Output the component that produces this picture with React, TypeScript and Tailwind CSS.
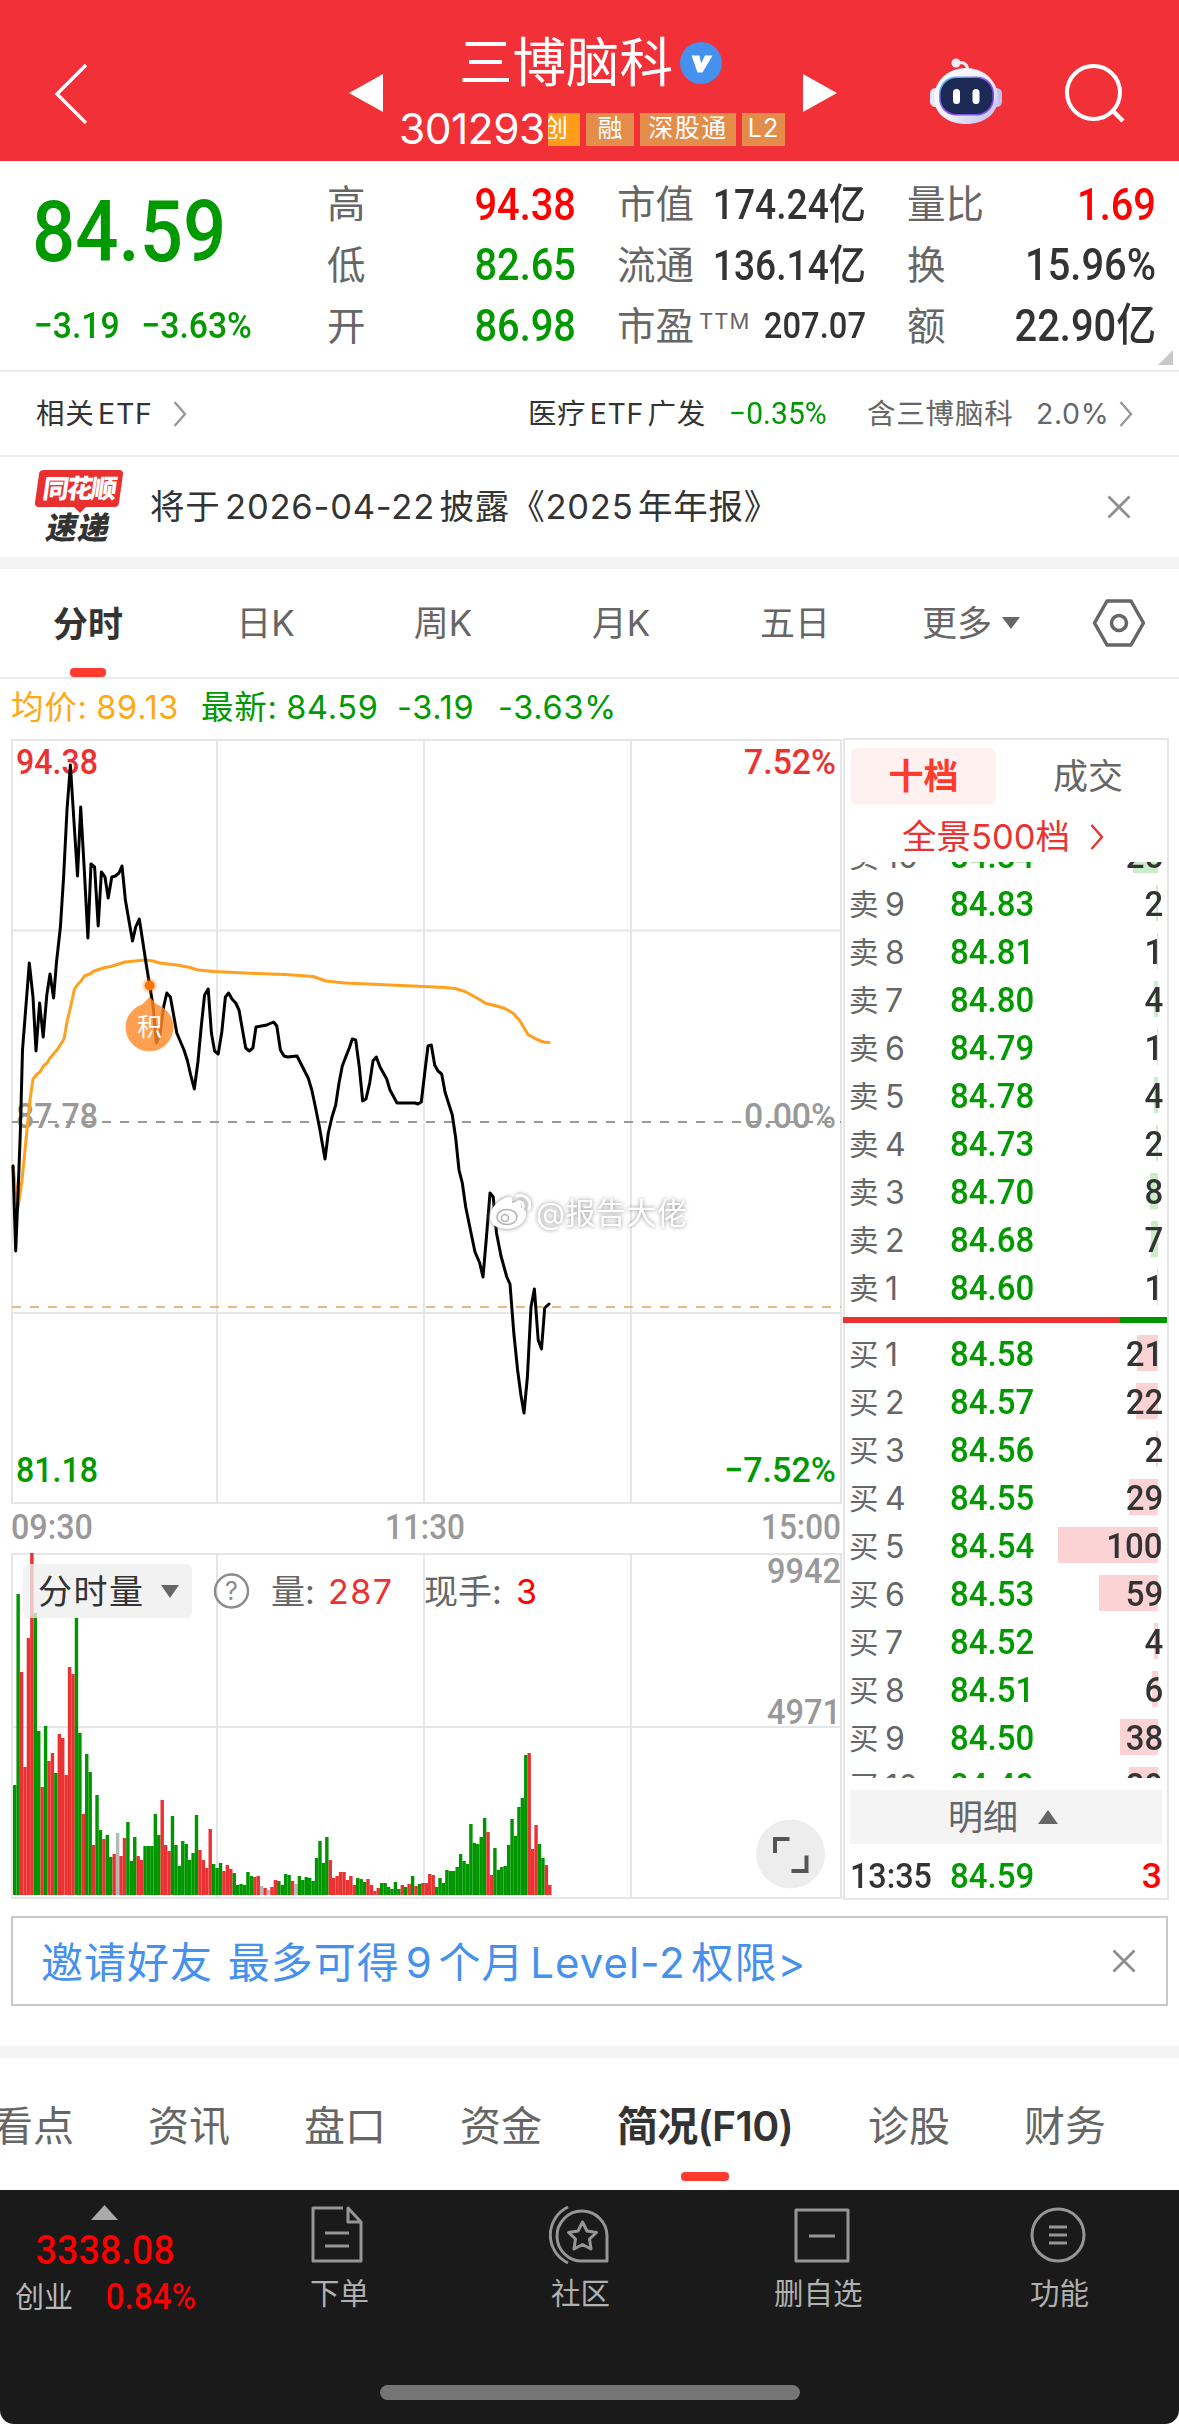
import clsx from "clsx";

const SANS = "font-['Inter','Noto_Sans_CJK_SC',sans-serif]";
const NUM = "font-['Roboto','Noto_Sans_CJK_SC',sans-serif] font-medium";

const stats = [
  [
    { label: "高", value: "94.38", color: "text-[#ff0000]" },
    { label: "低", value: "82.65", color: "text-[#009900]" },
    { label: "开", value: "86.98", color: "text-[#009900]" },
  ],
  [
    { label: "市值", value: "174.24亿", color: "text-[#333]", size: "text-[42px]" },
    { label: "流通", value: "136.14亿", color: "text-[#333]", size: "text-[42px]" },
    { label: "市盈", sup: "TTM", value: "207.07", color: "text-[#333]", size: "text-[37px]" },
  ],
  [
    { label: "量比", value: "1.69", color: "text-[#ff0000]" },
    { label: "换", value: "15.96%", color: "text-[#333]" },
    { label: "额", value: "22.90亿", color: "text-[#333]" },
  ],
];

const asks: [string, string, number][] = [
  ["10", "84.84", 25],
  ["9", "84.83", 2],
  ["8", "84.81", 1],
  ["7", "84.80", 4],
  ["6", "84.79", 1],
  ["5", "84.78", 4],
  ["4", "84.73", 2],
  ["3", "84.70", 8],
  ["2", "84.68", 7],
  ["1", "84.60", 1],
];

const bids: [string, string, number][] = [
  ["1", "84.58", 21],
  ["2", "84.57", 22],
  ["3", "84.56", 2],
  ["4", "84.55", 29],
  ["5", "84.54", 100],
  ["6", "84.53", 59],
  ["7", "84.52", 4],
  ["8", "84.51", 6],
  ["9", "84.50", 38],
  ["10", "84.49", 29],
];

const pricePoints =
  "13,1166 15.7,1251 18,1195 20.4,1130 22.5,1050 29.3,963 33,997 36,1051 39.6,1003 43.2,1037 46.8,995 50,974 53.6,998 56.4,963 60.4,927 63.6,877 67,810 70.4,765 74,822 77.5,876 80.7,807 84.3,870 87.9,938 91,864 94.6,867 98.2,926 101.4,872 105,877 108.2,898 111.8,877 115.4,876 119,873 122,866 125.4,900 129,921 132.5,941 135.7,927 139.3,919 143,943 146,963 149.6,985 153.2,1007 156.4,1043 160,1035 163.6,1007 166.8,993 170.4,997 173.6,1015 176.8,1033 184,1050 187.5,1061 190.7,1075 194.3,1089 197.9,1062 201.4,1025 204.6,995 208.2,989 211.4,1033 214.6,1051 218.2,1054 221.8,1032 225.4,997 228.6,993 232,999 235.7,1003 239,1010 242.5,1030 245.7,1048 249.3,1051 252.9,1048 256,1027 266.8,1025 273.6,1022 276.8,1026 280.4,1050 284,1056 287.5,1057 297,1056 304.6,1071 308.2,1078 311.8,1090 315.4,1107 319.6,1128 325,1159 328.3,1133 332,1117 335.7,1105 339,1083 342.3,1066 345.7,1057 349.3,1048 352.3,1039 355.7,1040 359.3,1067 362.7,1101 366,1099 369.7,1083 373,1061 376.3,1057 380,1067 386.7,1079 390,1090 397,1103 415,1103 418,1104 421.3,1102 424.7,1073 428,1046 431.3,1045 434.7,1065 438,1071 441.7,1074 445,1092 452.3,1115 455.7,1138 459,1170 462.3,1183 465.7,1207 470,1228 475,1252 479.7,1263 483,1277 486.2,1240 490,1193 493.2,1197 496.5,1233 501,1256 506.8,1277 510,1284 513.8,1333 517.6,1370 520.9,1395 524,1413 527.4,1377 531,1307 534.4,1289 538.2,1340 541.5,1349 544.7,1308 549,1304";

const averagePoints =
  "13,1166 18,1208 22,1180 27,1130 30,1100 33,1079 37,1074 40,1072 43.5,1066 47,1063 50,1058 57,1050 64,1039 67,1022 71,1005 74.5,989 78,984 81,981 84.5,976 91,973.5 94,971 105,967.5 111,966.5 125,962 145,960 153,961 160,963 177,965 190,967.5 198,970 214,971.5 257,973.5 285,974.5 313,976.5 326,981 345,983 424,986.5 445,987.5 455,988.5 465,991.5 477,998 486,1003.5 497,1006 505,1008.5 514,1014 520,1021 528,1034.5 536,1039 543,1042 549,1042.5";

// one entry per minute: g = down, r = up, n = unchanged, then the bar height
const volume =
  "g110 g301 r223 r128 r257 r342 g282 g164 r108 g169 r134 r142 g122 r161 r157 r120 r228 r221 g277 g162 r81 g141 g123 r50 g100 g65 r56 g60 g38 r41 n62 r39 r57 g73 g34 g58 r39 r35 g49 g49 g49 g81 g60 r95 r50 r44 g79 g50 g29 g54 g51 g35 g42 g80 r45 r35 r27 r66 g31 g27 g32 r24 r30 r26 g22 g10 g11 g10 g23 g19 r18 r19 n9 r7 n5 r8 r15 g14 g10 g21 g20 r14 n11 g19 g15 g18 g17 g14 g37 g54 g32 g58 r35 r17 r19 r23 r23 r15 r19 r10 g17 g16 g13 r16 r10 r4 r7 g12 g12 g8 g6 g13 g6 r10 g8 r11 g19 r9 g11 r12 r12 r21 r20 g8 g17 g12 g25 g24 g24 g28 g41 g34 g31 g71 g52 g51 g58 g77 r63 r20 g47 g25 g28 g29 g50 g76 g59 g88 g97 g140 r142 r46 r70 g51 g37 r30 r10"
    .split(" ")
    .map((v) => ({ type: v[0], height: Number(v.slice(1)) }));

const volumeColors: Record<string, string> = { g: "#009600", r: "#eb3232", n: "#b8b8b8" };

function Chevron({ color = "#999", className }: { color?: string; className?: string }) {
  return (
    <svg viewBox="0 0 14 26" className={clsx("h-[26px] w-[14px] shrink-0", className)} fill="none" stroke={color} strokeWidth="2.4">
      <path d="M1.5 1 12 13 1.5 25" />
    </svg>
  );
}

function Close() {
  return (
    <svg viewBox="0 0 24 24" className="h-6 w-6 shrink-0" fill="none" stroke="#8f8f8f" strokeWidth="2.8">
      <path d="M1.5 1.5 22.5 22.5M22.5 1.5 1.5 22.5" />
    </svg>
  );
}

function Robot() {
  return (
    <svg viewBox="0 0 74 68" className="h-[68px] w-[74px]">
      <defs>
        <linearGradient id="shell" x1="0" y1="0" x2="1" y2="1">
          <stop offset="0" stopColor="#ffffff" />
          <stop offset="0.55" stopColor="#f0effb" />
          <stop offset="1" stopColor="#b9b6e6" />
        </linearGradient>
        <linearGradient id="visor" x1="0" y1="0" x2="1" y2="1">
          <stop offset="0" stopColor="#59d5f5" />
          <stop offset="0.5" stopColor="#8a4df0" />
          <stop offset="1" stopColor="#6a58f5" />
        </linearGradient>
      </defs>
      <path d="M27 5c6-1.500 11 0 11.500 6" fill="none" stroke="#f3f0fb" strokeWidth="3" />
      <circle cx="27" cy="5" r="4.500" fill="#f3f0fb" />
      <rect x="1" y="30" width="12" height="19" rx="5.500" fill="#e8e7f7" />
      <rect x="61" y="30" width="12" height="19" rx="5.500" fill="#c4c2ea" />
      <path d="M37 10C56 10 69 24 69 40c0 16-14 26-32 26S5 56 5 40C5 24 18 10 37 10Z" fill="url(#shell)" />
      <rect x="10" y="18.500" width="55" height="39" rx="17" fill="url(#visor)" />
      <rect x="11.500" y="20" width="52" height="36" rx="16" fill="#1e2a56" />
      <rect x="24" y="31" width="7" height="15" rx="3.500" fill="#fff" />
      <rect x="43.500" y="31" width="7" height="15" rx="3.500" fill="#fff" />
    </svg>
  );
}

function Header() {
  return (
    <header className="flex h-[161px] items-start bg-[#f23038] text-white">
      <svg viewBox="0 0 34 60" className="mt-[64px] ml-[54px] h-[60px] w-[34px]" fill="none" stroke="#fff" strokeWidth="3.4">
        <path d="M32 1 3 30 32 59" />
      </svg>
      <svg viewBox="0 0 34 38" className="mt-[74px] ml-[261px] h-[38px] w-[34px]">
        <path d="M34 0V38L0 19Z" fill="#fff" />
      </svg>
      <div className="ml-4 w-[404px]">
        <div className="mt-[35px] flex h-14 items-center pl-[60px]">
          <span className="text-[53.500px] leading-none">三博脑科</span>
          <svg viewBox="0 0 42 42" className="ml-[7px] h-[42px] w-[42px]">
            <circle cx="21" cy="21" r="21" fill="#4691ee" />
            <path d="M11.500 13.500h8l1.500 8 4-8h7.500L22.500 30.500h-5Z" fill="#fff" />
          </svg>
        </div>
        <div className="mt-[20px] flex h-[36px] items-center text-[25px]">
          <span className="w-[149px] pt-px text-[42.500px] leading-none tracking-[-.5px]">301293</span>
          <span className="flex h-[33px] w-8 items-center justify-end overflow-hidden bg-[#ff9d1a] pr-3">创</span>
          <span className="ml-[6px] flex h-[33px] w-12 items-center justify-center bg-[#e48c4a]">融</span>
          <span className="ml-[6px] flex h-[33px] w-24 items-center justify-center bg-[#e48c4a] tracking-[1.500px]">深股通</span>
          <span className="ml-[6px] flex h-[33px] w-[43px] items-center justify-center bg-[#e48c4a] tracking-[1px]">L2</span>
        </div>
      </div>
      <svg viewBox="0 0 34 38" className="mt-[74px] h-[38px] w-[34px]">
        <path d="M0 0V38L34 19Z" fill="#fff" />
      </svg>
      <div className="mt-[58px] ml-[92px]">
        <Robot />
      </div>
      <svg viewBox="0 0 60 60" className="mt-[64px] ml-[62px] h-[60px] w-[60px]" fill="none" stroke="#fff" strokeWidth="4">
        <circle cx="28.500" cy="28.500" r="26.500" />
        <path d="M48 47 58 57" strokeWidth="4.500" />
      </svg>
    </header>
  );
}

function Quote() {
  return (
    <section className="flex h-[211px] border-b-2 border-[#ebebeb]">
      <div className={clsx(NUM, "w-[327px] pl-[32px] text-[#009900]")}>
        <div className="mt-[28px] h-[86px] origin-left scale-x-[.885] text-[86px] leading-[86px]">84.59</div>
        <div className="mt-[34px] flex h-[34px] origin-left scale-x-[.91] gap-[24px] pl-[2px] text-[37px] leading-[34px]">
          <span>−3.19</span>
          <span>−3.63%</span>
        </div>
      </div>
      <div className="flex gap-[41px] pt-[13px]">
        {stats.map((column, i) => (
          <div key={i} className="w-[249px]">
            {column.map((s) => (
              <div key={s.label} className="flex h-[60.700px] items-center">
                <span className="pt-[2px] text-[38.500px] text-[#666]">{s.label}</span>
                {"sup" in s && <span className="-mt-2 ml-[5px] text-[22px] tracking-[1px] text-[#666]">{s.sup}</span>}
                <span className={clsx(NUM, "ml-auto w-0 origin-right scale-x-[.885]", s.color, "size" in s ? s.size : "text-[45px]")}>
                  <span className="float-right">{s.value}</span>
                </span>
              </div>
            ))}
          </div>
        ))}
      </div>
      <svg viewBox="0 0 15 15" className="mt-[189px] ml-[2px] h-[15px] w-[15px] shrink-0">
        <path d="M15 0V15H0Z" fill="#c8c8c8" />
      </svg>
    </section>
  );
}

function EtfRow() {
  return (
    <section className="flex h-[85px] items-center border-b-2 border-[#ebebeb] pt-px pl-[36px] text-[28.500px] [word-spacing:-5px] text-[#333]">
      <span className="w-[137px] tracking-[.7px]">相关 ETF</span>
      <Chevron />
      <div className="flex items-center pl-[341px]">
        <span className="w-[201px] tracking-[.6px]">医疗 ETF 广发</span>
        <span className={clsx(NUM, "w-[138px] origin-left scale-x-[.97] text-[31px] font-normal text-[#009900]")}>−0.35%</span>
        <span className="w-[169px] tracking-[.8px] text-[#666]">含三博脑科</span>
        <span className="w-[83px] tracking-[.6px] text-[#666]">2.0%</span>
        <Chevron />
      </div>
    </section>
  );
}

function NewsRow() {
  return (
    <section className="flex h-[100px] items-center pr-[48px] pl-[37px] text-[#333]">
      <div className="-mt-[3px] flex w-[113px] flex-col">
        <div className="flex h-[37px] w-[84px] -skew-x-8 items-center justify-center rounded bg-[#e93030] text-[26px] leading-none font-black tracking-[-2px] text-white">
          同花顺
        </div>
        <svg viewBox="0 0 12 6" className="ml-[37px] h-[6px] w-3">
          <path d="M0 0H12L6 6Z" fill="#e93030" />
        </svg>
        <div className="flex h-[28px] w-[84px] -skew-x-12 items-center justify-center text-[31px] leading-none font-black tracking-[1px]">速递</div>
      </div>
      <span className="text-[34.500px] tracking-[.8px] [word-spacing:-6px]">
        将于 2026-04-22 披露《2025 年年报》
      </span>
      <div className="ml-auto">
        <Close />
      </div>
    </section>
  );
}

function PeriodTabs() {
  return (
    <nav className="flex h-[110px] items-center border-b-2 border-[#ebebeb] text-[35px] text-[#666]">
      <div className="flex h-full w-[176px] flex-col items-center justify-end">
        <span className="font-bold leading-[52px] text-[#333]">分时</span>
        <span className="mt-[18px] h-[9px] w-9 rounded bg-[#ff3b30]" />
      </div>
      <span className="w-[179px] text-center">日K</span>
      <span className="w-[176px] text-center">周K</span>
      <span className="w-[180px] text-center">月K</span>
      <span className="w-[168px] text-center">五日</span>
      <span className="ml-[43px]">更多</span>
      <svg viewBox="0 0 18 12" className="ml-[10px] h-3 w-[18px]">
        <path d="M0 0H18L9 12Z" fill="#666" />
      </svg>
      <svg viewBox="0 0 54 48" className="ml-[72px] h-[48px] w-[54px]" fill="none" stroke="#666" strokeWidth="3.500">
        <path d="M15 2H39L51.500 24 39 46H15L2.500 24Z" strokeLinejoin="round" />
        <circle cx="27" cy="24" r="7.500" />
      </svg>
    </nav>
  );
}

function Label(props: { x: number; y: number; w: number; fill: string; children: string }) {
  const { x, y, w, fill, children } = props;
  return (
    <text x={x} y={y} textLength={w} lengthAdjust="spacingAndGlyphs" fill={fill} fontSize="35.500" className={NUM}>
      {children}
    </text>
  );
}

function Chart() {
  return (
    <svg viewBox="10 738 833 1164" className="h-[1164px] w-[833px] shrink-0">
      <g stroke="#e6e6e6" strokeWidth="2" fill="none">
        <path d="M12 740H841V1503H12ZM12 1554H841V1898H12Z" />
        <path d="M12 930.500H841M12 1122H841M12 1313H841M12 1727H841" />
        <path d="M217 740V1503M424 740V1503M631 740V1503M217 1554V1898M424 1554V1898M631 1554V1898" />
      </g>
      <path d="M12 1122H841" stroke="#fff" strokeWidth="2" />
      <path d="M12 1122H841" stroke="#777" strokeWidth="1.600" strokeDasharray="9 9" />
      <path d="M12 1307H841" stroke="#d9a560" strokeWidth="1.600" strokeDasharray="9 9" />
      <Label x={16} y={774} w={82} fill="#eb3232">94.38</Label>
      <Label x={744} y={774} w={92} fill="#eb3232">7.52%</Label>
      <Label x={16} y={1128} w={82} fill="#999">87.78</Label>
      <Label x={744} y={1128} w={92} fill="#999">0.00%</Label>
      <Label x={16} y={1482} w={82} fill="#009900">81.18</Label>
      <Label x={724} y={1482} w={112} fill="#009900">−7.52%</Label>
      <Label x={11} y={1539} w={82} fill="#999">09:30</Label>
      <Label x={385} y={1539} w={80} fill="#999">11:30</Label>
      <Label x={761} y={1539} w={80} fill="#999">15:00</Label>

      <polyline points={averagePoints} fill="none" stroke="#ffa01e" strokeWidth="3" strokeLinejoin="round" strokeLinecap="round" />
      <polyline points={pricePoints} fill="none" stroke="#000" strokeWidth="3" strokeLinejoin="round" strokeLinecap="round" />
      <circle cx="149.600" cy="985.500" r="7.500" fill="#ff7300" opacity="0.25" />
      <circle cx="149.600" cy="985.500" r="5" fill="#ff7300" />
      <path d="M149.600 997 157 1004.500A24 24 0 1 1 142 1004.500Z" fill="#ff8a28" opacity="0.82" />
      <text x="149.600" y="1036" textAnchor="middle" fontSize="25" fill="#fff" className={SANS}>
        积
      </text>

      <g fill="#fff" style={{ filter: "drop-shadow(0 0 2px #888)" }}>
        <path d="M490 1217c0-9 9-18 18-20 5-1 5 3 4 6 5-2 11-1 9 5 4 1 6 4 5 8-2 8-10 13-19 13s-17-4-17-12Z" />
        <path d="M517 1196c9-2 15 5 12 13M518 1202c4-1 6 2 5 6" fill="none" stroke="#fff" strokeWidth="3" strokeLinecap="round" />
        <ellipse cx="507" cy="1217" rx="10" ry="7.500" fill="none" stroke="#b5b5b5" strokeWidth="1.500" />
        <circle cx="505" cy="1218" r="3.500" fill="none" stroke="#b5b5b5" strokeWidth="1.500" />
        <text x="536" y="1224" textLength="151" fontSize="30" className={SANS}>
          @报告大佬
        </text>
      </g>

      {volume.map((v, i) => (
        <rect key={i} x={13 + i * 3.43} y={1895 - v.height} width="3.430" height={v.height} fill={volumeColors[v.type]} />
      ))}
      <Label x={767} y={1583} w={74} fill="#999">9942</Label>
      <Label x={767} y={1724} w={74} fill="#999">4971</Label>

      <rect x="23" y="1564" width="169" height="54" rx="6" fill="#f0f0f0" opacity="0.6" />
      <rect x="23" y="1564" width="169" height="54" rx="6" fill="#eee" opacity="0.4" />
      <path d="M161 1585H179L170 1598Z" fill="#666" />
      <circle cx="231.500" cy="1591" r="16.500" fill="none" stroke="#8c8c8c" strokeWidth="2.400" />
      <g fontSize="34" className={SANS}>
        <text x="38" y="1604" textLength="105" fill="#333">分时量</text>
        <text x="231.500" y="1600" fontSize="25" textAnchor="middle" fill="#8c8c8c">?</text>
        <text x="271" y="1604" fill="#666">量:</text>
        <text x="328" y="1604" textLength="64" fill="#eb3232">287</text>
        <text x="424" y="1604" fill="#666">现手:</text>
        <text x="516" y="1604" fill="#ff0000">3</text>
      </g>
      <circle cx="790.500" cy="1854" r="34.500" fill="#ededed" />
      <path d="M775 1853V1839H789.500M806.500 1855.500V1871H791.500" fill="none" stroke="#555" strokeWidth="4" />
    </svg>
  );
}

function BookRow({ side, level, price, qty }: { side: string; level: string; price: string; qty: number }) {
  return (
    <div className="relative flex h-12 shrink-0 items-center pt-[3px] pr-[4px] pl-[4px] leading-none">
      <span
        className={clsx("absolute top-[6px] right-[9px] h-9", side === "卖" ? "bg-[#c9eccb]" : "bg-[#fbd3d5]")}
        style={{ width: qty }}
      />
      <span className="w-[36px] text-[29.500px] text-[#666]">{side}</span>
      <span className="w-[65px] text-[32px] text-[#666]">{level}</span>
      <span className={clsx(NUM, "origin-left scale-x-[.93] text-[35.500px] text-[#009900]")}>{price}</span>
      <span className={clsx(NUM, "relative ml-auto origin-right scale-x-[.93] text-[35.500px] text-[#333]")}>{qty}</span>
    </div>
  );
}

function OrderBook() {
  return (
    <aside className="flex h-[1162px] w-[326px] flex-col border-2 border-[#e6e6e6]">
      <div className="mt-[8px] flex h-[57px] shrink-0 items-center pl-[6px] text-[35px]">
        <span className="flex h-[57px] w-[145px] shrink-0 items-center justify-center rounded-md bg-[#fff1f0] font-bold text-[#ff3b30]">十档</span>
        <span className="ml-[57px] text-[#666]">成交</span>
      </div>
      <div className="mt-[7px] flex h-[50px] shrink-0 items-center pl-[57px] text-[34.500px] leading-none text-[#eb3232]">
        <span className="w-[188px]">全景500档</span>
        <Chevron color="#eb3232" />
      </div>
      <div className="flex h-[449px] shrink-0 flex-col justify-end overflow-hidden">
        {asks.map(([level, price, qty]) => (
          <BookRow key={level} side="卖" level={level} price={price} qty={qty} />
        ))}
      </div>
      <div className="mt-[6px] -ml-[2px] flex h-[6px] shrink-0">
        <div className="w-[277px] bg-[#eb3232]" />
        <div className="flex-1 bg-[#009600]" />
      </div>
      <div className="mt-[6px] flex h-[449px] shrink-0 flex-col overflow-hidden">
        {bids.map(([level, price, qty]) => (
          <BookRow key={level} side="买" level={level} price={price} qty={qty} />
        ))}
      </div>
      <div className="mx-[5px] mt-3 flex h-[54px] shrink-0 items-center bg-[#f4f4f4] pl-[98px] text-[35px] text-[#666]">
        明细
        <svg viewBox="0 0 20 14" className="ml-[20px] h-[14px] w-5">
          <path d="M10 0 20 14H0Z" fill="#666" />
        </svg>
      </div>
      <div className={clsx(NUM, "mt-[9px] flex h-12 shrink-0 items-center pr-[5px] pl-[5px] text-[35.500px] text-[#333]")}>
        <span className="w-[100px] origin-left scale-x-[.91]">13:35</span>
        <span className="origin-left scale-x-[.93] text-[#009900]">84.59</span>
        <span className="ml-auto text-[#ff0000]">3</span>
      </div>
    </aside>
  );
}

function Market() {
  return (
    <section>
      <div className="flex h-[59px] items-center pl-[11px] text-[32.500px] tracking-[.7px] text-[#009900]">
        <span className="w-[190px] [word-spacing:-1px] text-[#ffa80f]">均价: 89.13</span>
        <span className="w-[196px] [word-spacing:-1px]">最新: 84.59</span>
        <span className="w-[101px]">-3.19</span>
        <span>-3.63%</span>
      </div>
      <div className="flex pl-[10px]">
        <Chart />
        <OrderBook />
      </div>
    </section>
  );
}

function Banner() {
  return (
    <div className="mx-[11px] mt-[14px] flex h-[90px] items-center justify-between border-2 border-[#c8c8c8] pr-[30px] pl-[28px]">
      <span className="pt-[2px] text-[42px] tracking-[1px] [word-spacing:-7px] text-[#4691ee]">
        <span className="mr-[9px]">邀请好友</span> 最多可得 9 个月 Level-2 权限&gt;
      </span>
      <Close />
    </div>
  );
}

function SectionTabs() {
  return (
    <nav className="flex h-[132px] items-start overflow-hidden pt-[38px] text-[41px] leading-[60px] text-[#666]">
      <span className="-ml-[8px] w-[156px] shrink-0">看点</span>
      <span className="w-[156px] shrink-0">资讯</span>
      <span className="w-[156px] shrink-0">盘口</span>
      <span className="w-[156px] shrink-0">资金</span>
      <span className="flex w-[178px] shrink-0 flex-col items-center font-semibold tracking-[-.7px] text-[#333]">
        简况(F10)
        <i className="mt-[16px] h-[9px] w-12 rounded bg-[#ff3b30]" />
      </span>
      <span className="ml-[74px] w-[156px] shrink-0">诊股</span>
      <span className="shrink-0">财务</span>
    </nav>
  );
}

const actions = [
  {
    label: "下单",
    width: "w-[212px] pl-[44px]",
    icon: <path d="M35 3H5V56H53V17L40 3V17H53M17 28H41M17 41H41" />,
  },
  {
    label: "社区",
    width: "w-[242px] pl-[73px]",
    icon: (
      <>
        <path d="M58 56H34A25 25 0 1 1 58 31Z" />
        <path d="M19 2A31 31 0 0 0 19 58" />
        <path d="M33.500 17 38 26 47.500 27.500 40.500 34 42 44 33.500 39.500 25 44 26.500 34 19.500 27.500 29 26Z" />
      </>
    ),
  },
  {
    label: "删自选",
    width: "w-[242px] pl-[54px]",
    icon: <path d="M5 5H57V56H5ZM18 31H44" />,
  },
  {
    label: "功能",
    width: "w-[219px] pl-[68px]",
    icon: (
      <>
        <circle cx="30" cy="30" r="26" />
        <path d="M21 22H39M21 30H39M21 38H39" />
      </>
    ),
  },
];

function BottomBar() {
  return (
    <footer className="flex h-[234px] flex-col rounded-b-[14px] bg-[#1a1a1a]">
      <div className="flex h-[195px]">
        <div className="w-[264px] shrink-0">
          <svg viewBox="0 0 27 15" className="mt-[15px] ml-[91px] h-[15px] w-[27px]">
            <path d="M13.500 0 27 15H0Z" fill="#aaa" />
          </svg>
          <div className={clsx(NUM, "mt-[9px] ml-[36px] h-[42px] origin-left scale-x-[.92] text-[41px] leading-[42px] text-[#ff0000]")}>3338.08</div>
          <div className="mt-[6px] flex h-[40px] items-center pl-[15px] text-[#b8b8b8]">
            <span className="w-[91px] pt-[2px] text-[29px]">创业</span>
            <span className={clsx(NUM, "origin-left scale-x-[.9] text-[37px] text-[#ff0000]")}>0.84%</span>
          </div>
        </div>
        {actions.map((a) => (
          <div key={a.label} className={clsx("flex shrink-0 flex-col", a.width)}>
            <svg
              viewBox="0 0 62 60"
              className={clsx("mt-[15px] h-[60px] w-[62px]", a.label === "删自选" && "ml-[19px]")}
              fill="none"
              stroke="#969696"
              strokeWidth="3"
              strokeLinejoin="round"
            >
              {a.icon}
            </svg>
            <span className="mt-[6px] ml-[2px] text-[29.500px] leading-[44px] text-[#b0b0b0]">{a.label}</span>
          </div>
        ))}
      </div>
      <div className="mx-auto h-[15px] w-[420px] rounded-full bg-[#757575]" />
    </footer>
  );
}

export default function App() {
  return (
    <main className={clsx(SANS, "h-[2424px] w-[1179px] overflow-hidden bg-white whitespace-nowrap")}>
      <Header />
      <Quote />
      <EtfRow />
      <NewsRow />
      <div className="h-3 bg-[#f4f4f4]" />
      <PeriodTabs />
      <Market />
      <Banner />
      <div className="mt-[40px] h-3 bg-[#f4f4f4]" />
      <SectionTabs />
      <BottomBar />
    </main>
  );
}
